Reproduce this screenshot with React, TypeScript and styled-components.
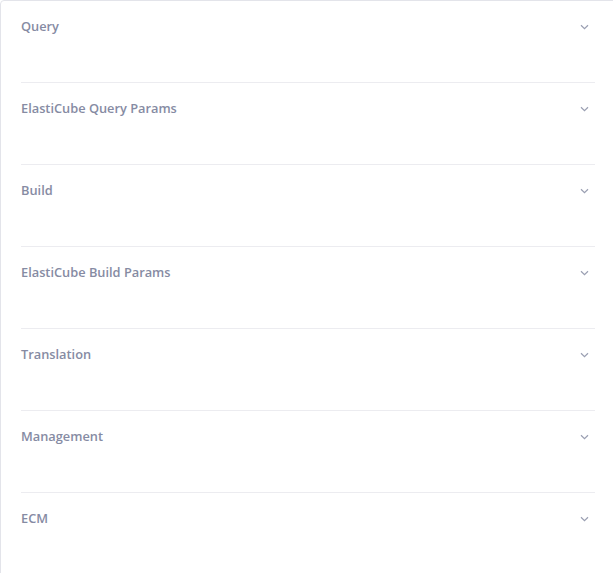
import React from "react";
import styled, { createGlobalStyle } from "styled-components";

const Global = createGlobalStyle`
  html, body { margin: 0; padding: 0; background: #ffffff; overflow: hidden; }
  body { font-family: "Open Sans", "Noto Sans", sans-serif; }
`;

const Card = styled.div`
  box-sizing: border-box;
  width: 640px;
  min-height: 600px;
  background: #ffffff;
  border: 1px solid #e3e4ea;
  border-radius: 4px;
  padding: 0 44px 0 20px;
`;

const Section = styled.div<{ $last?: boolean }>`
  box-sizing: border-box;
  height: 82px;
  border-bottom: 1px solid ${(p) => (p.$last ? "transparent" : "#ececf0")};
`;

const Header = styled.div`
  display: flex;
  align-items: center;
  justify-content: space-between;
  padding-top: 15px;
  height: 20px;
`;

const Title = styled.span`
  font-size: 12.8px;
  font-weight: 600;
  color: #868ba3;
`;

const Chevron = styled.svg`
  width: 9px;
  height: 6px;
  margin-right: 6px;
  margin-top: 2px;
`;

const sections = [
  "Query",
  "ElastiCube Query Params",
  "Build",
  "ElastiCube Build Params",
  "Translation",
  "Management",
  "ECM",
];

export default function App() {
  return (
    <>
      <Global />
      <Card>
        {sections.map((s, i) => (
          <Section key={s} $last={i === sections.length - 1}>
            <Header>
              <Title>{s}</Title>
              <Chevron viewBox="0 0 9 6" aria-hidden>
                <path d="M1 1.2 L4.5 4.6 L8 1.2" fill="none" stroke="#9a9fb2" strokeWidth="1.2" />
              </Chevron>
            </Header>
          </Section>
        ))}
      </Card>
    </>
  );
}
